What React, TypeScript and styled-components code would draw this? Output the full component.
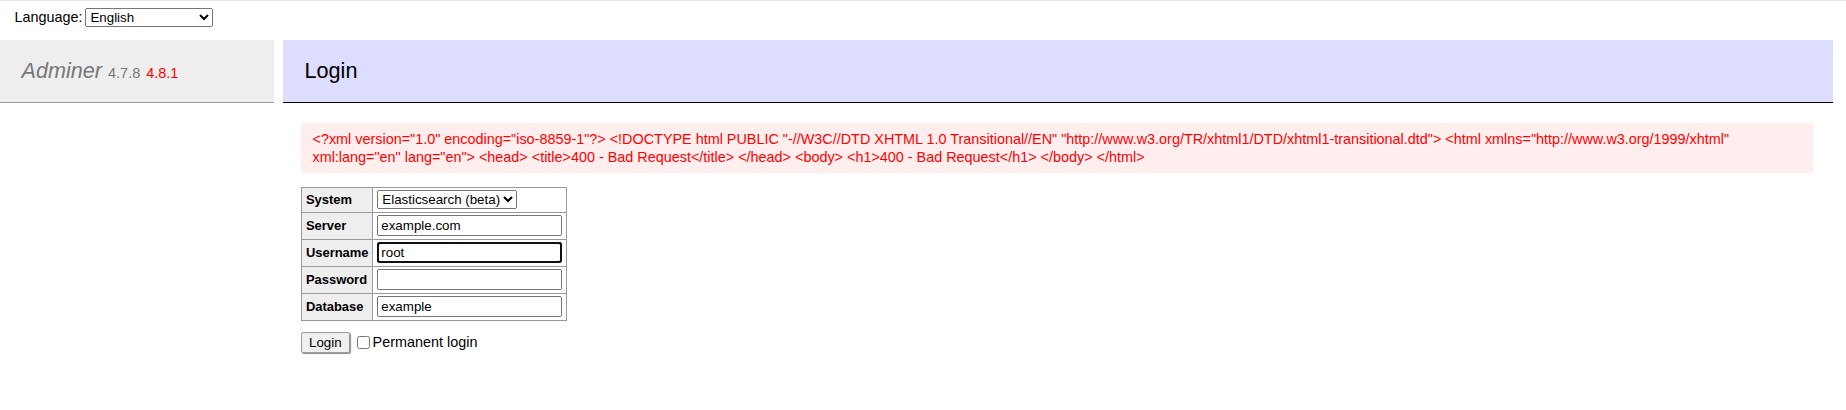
import React from 'react';
import styled, { createGlobalStyle } from 'styled-components';

const GlobalStyle = createGlobalStyle`
  html, body {
    margin: 0;
    padding: 0;
    background: #fff;
  }
  body {
    color: #000;
    font: 14.4px/1.25 "Liberation Sans", Arial, Helvetica, sans-serif;
    border-top: 1px solid #e4e4e4;
  }
`;

const LangBar = styled.div`
  height: 39px;
  box-sizing: border-box;
  padding: 4.3px 14.4px 0;
  line-height: 25.9px;
`;

const LangSelect = styled.select`
  width: 128px;
  height: 19px;
  font: 13.33px "Liberation Sans", Arial, sans-serif;
  margin-left: 3px;
`;

const Layout = styled.div`
  display: flex;
  align-items: flex-start;
`;

const Menu = styled.div`
  flex: none;
  width: 273.6px;
`;

const Brand = styled.h1`
  margin: 0;
  padding: 17.3px 21.6px;
  height: 27px;
  font-size: 21.6px;
  line-height: 27px;
  font-weight: normal;
  color: #777;
  background: #eee;
  border-bottom: 1px solid #999;
`;

const BrandLink = styled.a`
  color: #777;
  font-style: italic;
  text-decoration: none;
`;

const Version = styled.span<{ $latest?: boolean }>`
  font-size: 67%;
  line-height: 1;
  color: ${(p) => (p.$latest ? 'red' : '#777')};
`;

const Content = styled.div`
  flex: 1;
  margin-left: 27.4px;
  padding: 0 13px 20px 0;
`;

const Title = styled.h2`
  margin: 0 0 20px -18px;
  padding: 17.3px 21.6px;
  font-size: 21.6px;
  line-height: 27px;
  font-weight: normal;
  color: #000;
  background: #ddf;
  border-bottom: 1px solid #000;
`;

const ErrorBox = styled.div`
  color: red;
  background: #fee;
  padding: 7.2px 11.5px;
  margin: 0 20px 0 0;
`;

const LoginTable = styled.table`
  margin: 14px 20px 0 0;
  border-collapse: collapse;
  font-size: 12.96px;
`;

const HeadCell = styled.th`
  background: #eee;
  text-align: left;
  border: 1px solid #999;
  padding: 2.5px 3.9px;
`;

const Cell = styled.td`
  border: 1px solid #999;
  padding: 2.5px 3.9px;
`;

const Field = styled.input<{ $focused?: boolean }>`
  width: 185px;
  box-sizing: border-box;
  font: 13.33px "Liberation Sans", Arial, sans-serif;
  ${(p) =>
    p.$focused
      ? `outline: 2px solid #101010; outline-offset: -2px; border-radius: 3px;`
      : ''}
`;

const SystemSelect = styled.select`
  font: 13.33px "Liberation Sans", Arial, sans-serif;
`;

const Actions = styled.p`
  margin: 11px 20px 0 0;
  display: flex;
  align-items: center;
`;

const SubmitButton = styled.button`
  font: 13.33px "Liberation Sans", Arial, sans-serif;
  height: 21px;
  padding: 1px 7px;
  background: #efefef;
  border: 1px solid #9a9a9a;
  border-radius: 2px;
  box-shadow: 1px 1px 1px rgba(0, 0, 0, 0.45);
  color: #000;
`;

const Permanent = styled.label`
  display: inline-flex;
  align-items: center;
  margin-left: 4px;

  input {
    margin: 0 3px 0 3px;
    width: 13px;
    height: 13px;
  }
`;

const errorText =
  '<?xml version="1.0" encoding="iso-8859-1"?> <!DOCTYPE html PUBLIC "-//W3C//DTD XHTML 1.0 Transitional//EN" "http://www.w3.org/TR/xhtml1/DTD/xhtml1-transitional.dtd"> <html xmlns="http://www.w3.org/1999/xhtml" xml:lang="en" lang="en"> <head> <title>400 - Bad Request</title> </head> <body> <h1>400 - Bad Request</h1> </body> </html>';

export default function App() {
  return (
    <>
      <GlobalStyle />
      <LangBar>
        Language:
        <LangSelect defaultValue="en">
          <option value="en">English</option>
        </LangSelect>
      </LangBar>
      <Layout>
        <Menu>
          <Brand>
            <BrandLink href="#">Adminer</BrandLink> <Version>4.7.8</Version>{' '}
            <Version $latest>4.8.1</Version>
          </Brand>
        </Menu>
        <Content>
          <Title>Login</Title>
          <ErrorBox>{errorText}</ErrorBox>
          <form onSubmit={(e) => e.preventDefault()}>
            <LoginTable>
              <tbody>
                <tr>
                  <HeadCell>System</HeadCell>
                  <Cell>
                    <SystemSelect defaultValue="elastic">
                      <option value="elastic">Elasticsearch (beta)</option>
                    </SystemSelect>
                  </Cell>
                </tr>
                <tr>
                  <HeadCell>Server</HeadCell>
                  <Cell>
                    <Field defaultValue="example.com" />
                  </Cell>
                </tr>
                <tr>
                  <HeadCell>Username</HeadCell>
                  <Cell>
                    <Field defaultValue="root" $focused />
                  </Cell>
                </tr>
                <tr>
                  <HeadCell>Password</HeadCell>
                  <Cell>
                    <Field type="password" />
                  </Cell>
                </tr>
                <tr>
                  <HeadCell>Database</HeadCell>
                  <Cell>
                    <Field defaultValue="example" />
                  </Cell>
                </tr>
              </tbody>
            </LoginTable>
            <Actions>
              <SubmitButton type="submit">Login</SubmitButton>
              <Permanent>
                <input type="checkbox" />
                Permanent login
              </Permanent>
            </Actions>
          </form>
        </Content>
      </Layout>
    </>
  );
}
